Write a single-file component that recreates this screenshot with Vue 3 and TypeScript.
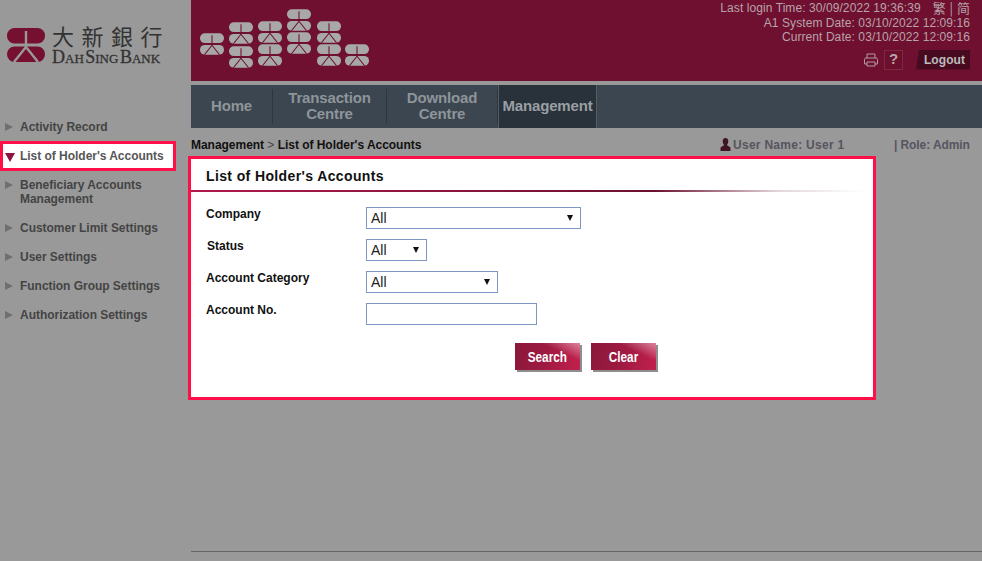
<script setup lang="ts">
import { ref } from 'vue'

const menu = [
  { label: 'Activity Record' },
  { label: "List of Holder's Accounts", active: true },
  { label: 'Beneficiary Accounts Management' },
  { label: 'Customer Limit Settings' },
  { label: 'User Settings' },
  { label: 'Function Group Settings' },
  { label: 'Authorization Settings' },
]

const tabs = [
  { label: 'Home', width: 82 },
  { label: 'Transaction Centre', width: 114 },
  { label: 'Download Centre', width: 111 },
  { label: 'Management', width: 99, active: true },
]

// positions of the little marks in the header banner
const marks = [
  [9, 33], [38, 22], [38, 46], [67, 21], [67, 44],
  [96, 9], [96, 32], [126, 21], [126, 44], [154, 44],
]

const company = ref('All')
const status = ref('All')
const category = ref('All')
const accountNo = ref('')

const clear = () => {
  company.value = 'All'
  status.value = 'All'
  category.value = 'All'
  accountNo.value = ''
}
</script>

<template>
  <div class="page">
    <svg class="defs" width="0" height="0">
      <symbol id="mark" viewBox="0 0 38 34">
        <rect class="pill" x="0" y="0" width="38" height="15.500" rx="7.500" />
        <rect class="pill" x="0" y="18.500" width="38" height="15.500" rx="7.500" />
        <path class="cut" d="M19 3V19M19 19L7 34M19 19L31 34" />
      </symbol>
    </svg>

    <aside class="side">
      <div class="brand">
        <svg class="brand-mark" width="38" height="34"><use href="#mark" /></svg>
        <div class="brand-text">
          <div class="brand-cn">大新銀行</div>
          <div class="brand-en">Dah Sing Bank</div>
        </div>
      </div>
      <ul class="menu">
        <li v-for="item in menu" :key="item.label" :class="{ active: item.active }">
          <span class="arrow"></span>
          <span>{{ item.label }}</span>
        </li>
      </ul>
    </aside>

    <main class="main">
      <header class="banner">
        <svg class="marks" width="191" height="81">
          <use v-for="m in marks" :key="m.join()" href="#mark" :x="m[0]" :y="m[1]" width="24" height="22" />
        </svg>
        <div class="info">
          <div class="line">
            <span>Last login Time: 30/09/2022 19:36:39</span>
            <span class="lang">繁 | 简</span>
          </div>
          <div class="line">A1 System Date: 03/10/2022 12:09:16</div>
          <div class="line">Current Date: 03/10/2022 12:09:16</div>
          <div class="tools">
            <svg class="printer" width="16" height="14" viewBox="0 0 16 14">
              <path d="M4 5V1H12V5M4 11H1.5V6.5Q1.5 5 3 5H13Q14.500 5 14.500 6.500V11H12M4 9H12V13H4Z" />
            </svg>
            <span class="help">?</span>
            <span class="logout">Logout</span>
          </div>
        </div>
      </header>

      <nav class="tabs">
        <a
          v-for="tab in tabs"
          :key="tab.label"
          :class="{ active: tab.active }"
          :style="{ width: tab.width + 'px' }"
        >{{ tab.label }}</a>
      </nav>

      <div class="crumbs">
        <div class="path">Management <span class="gt">&gt;</span> List of Holder's Accounts</div>
        <div class="user">
          <svg width="11" height="13" viewBox="0 0 11 13">
            <path d="M5.500 0C7.500 0 8.300 1.500 8.300 3.300C8.300 5 7.500 6.500 6.800 7L10.500 9.500V13H.5V9.500L4.200 7C3.500 6.500 2.700 5 2.700 3.300C2.700 1.500 3.500 0 5.500 0Z" />
          </svg>
          <span>User Name: User 1</span>
        </div>
        <div class="role">| Role: Admin</div>
      </div>

      <section class="panel">
        <h2>List of Holder's Accounts</h2>
        <div class="rule"></div>
        <form class="form" @submit.prevent>
          <label for="company">Company</label>
          <div class="pick w-lg">
            <select id="company" v-model="company"><option>All</option></select>
          </div>
          <label for="status" class="nudge">Status</label>
          <div class="pick w-sm">
            <select id="status" v-model="status"><option>All</option></select>
          </div>
          <label for="category">Account Category</label>
          <div class="pick w-md">
            <select id="category" v-model="category"><option>All</option></select>
          </div>
          <label for="account">Account No.</label>
          <input id="account" v-model="accountNo" type="text" />
          <div class="actions">
            <button type="submit"><span>Search</span></button>
            <button type="button" @click="clear"><span>Clear</span></button>
          </div>
        </form>
      </section>

      <div class="foot"></div>
    </main>
  </div>
</template>

<style>
html,
body {
  margin: 0;
  background: #999999;
}
</style>

<style scoped>
.page {
  display: flex;
  width: 982px;
  height: 561px;
  overflow: hidden;
  background: #999999;
  font-family: "Liberation Sans", Arial, sans-serif;
  font-size: 12px;
}

.defs {
  position: absolute;
}

.pill {
  fill: currentColor;
}

.cut {
  fill: none;
  stroke: var(--cut, #999999);
  stroke-width: var(--cut-width, 2.4);
}

.side {
  width: 191px;
  flex: none;
}

.brand {
  display: flex;
  gap: 7px;
  height: 112px;
  padding: 24px 0 0 7px;
  box-sizing: border-box;
  color: #761030;
}

.brand-mark {
  margin-top: 4px;
}

.brand-cn {
  font-family: "Noto Sans CJK TC", sans-serif;
  font-weight: 400;
  font-size: 22px;
  line-height: 22px;
  letter-spacing: 7.500px;
  white-space: nowrap;
  color: #333333;
}

.brand-en {
  margin-top: 5px;
  font-family: "Liberation Serif", serif;
  font-variant: small-caps;
  font-size: 18px;
  line-height: 13px;
  word-spacing: -3px;
  white-space: nowrap;
  -webkit-text-stroke: 0.3px #333333;
  color: #333333;
}

.menu {
  list-style: none;
  margin: 0;
  padding: 0;
  width: 176px;
}

.menu li {
  display: flex;
  gap: 7px;
  padding: 8px 8px 7px 5px;
  font-weight: bold;
  line-height: 14px;
  letter-spacing: -0.03px;
  color: #444444;
}

.menu .active {
  height: 14px;
  margin-bottom: -1px;
  padding-bottom: 8px;
  background: #ffffff;
  box-shadow: inset 0 0 0 3px #ff0f47;
  color: #565656;
}

.arrow {
  flex: none;
  width: 0;
  height: 0;
  margin-top: 3px;
  border-left: 8px solid #6f6f6f;
  border-top: 4.5px solid transparent;
  border-bottom: 4.5px solid transparent;
}

.active .arrow {
  margin-top: 4px;
  margin-right: -2px;
  border-left: 5px solid transparent;
  border-right: 5px solid transparent;
  border-top: 9px solid #8e1440;
  border-bottom: 0;
}

.main {
  flex: 1;
  display: flex;
  flex-direction: column;
  min-width: 0;
}

.banner {
  display: flex;
  justify-content: space-between;
  height: 81px;
  background: #701030;
}

.marks {
  --cut: #701030;
  --cut-width: 1.7;
  color: #a8a8a8;
}

.info {
  padding: 1px 12px 0 0;
  text-align: right;
  line-height: 14.5px;
  letter-spacing: 0.08px;
  color: #b7a3aa;
}

.line {
  display: flex;
  justify-content: flex-end;
}

.lang {
  height: 14.5px;
  margin-left: 12px;
  font-family: "Noto Sans CJK TC", sans-serif;
  font-size: 13px;
  line-height: 13px;
  letter-spacing: 0;
  word-spacing: 1px;
}

.tools {
  display: flex;
  align-items: center;
  justify-content: flex-end;
  margin-top: 5px;
}

.printer {
  fill: none;
  stroke: #b09aa3;
  stroke-width: 1;
}

.help {
  display: flex;
  align-items: center;
  justify-content: center;
  width: 17px;
  height: 18px;
  margin-left: 5px;
  border: 1px solid #802842;
  background: #6a0f2c;
  font-size: 15px;
  font-weight: bold;
  color: #b7a3aa;
}

.logout {
  width: 54px;
  height: 20px;
  margin-left: 13px;
  padding-left: 3px;
  box-sizing: border-box;
  line-height: 20px;
  text-align: center;
  background: #480a20;
  clip-path: polygon(3px 0, 100% 0, 100% 100%, 0 100%);
  font-weight: bold;
  color: #bcbcbc;
}

.tabs {
  display: flex;
  height: 43px;
  margin-top: 4px;
  background: #3b4650;
}

.tabs a {
  display: flex;
  align-items: center;
  justify-content: center;
  box-sizing: border-box;
  margin: 4px 0;
  padding: 0 10px 1px;
  border-right: 1px solid #2d363e;
  text-align: center;
  font-size: 15px;
  line-height: 16px;
  letter-spacing: -0.15px;
  font-weight: bold;
  color: #8f9499;
}

.tabs .active {
  margin: 0;
  padding: 0 0 1px;
  background: #29323b;
  border-left: 1px solid #525c65;
  border-right: 1px solid #525c65;
  color: #9a9fa3;
}

.crumbs {
  display: flex;
  align-items: center;
  box-sizing: border-box;
  height: 28px;
  padding-top: 5px;
  font-weight: bold;
  letter-spacing: -0.03px;
  color: #111111;
}

.gt {
  font-weight: normal;
  color: #444444;
}

.path {
  width: 529px;
}

.user {
  display: flex;
  align-items: center;
  gap: 2px;
  width: 174px;
  letter-spacing: 0.28px;
  color: #55555e;
}

.user svg {
  fill: #3f1522;
}

.role {
  letter-spacing: -0.08px;
  color: #55555e;
}

.panel {
  box-sizing: border-box;
  width: 688px;
  height: 244px;
  margin-left: -3px;
  border: 3px solid #ff0f47;
  background: #ffffff;
  color: #111111;
}

h2 {
  margin: 0;
  padding: 9px 0 0 15px;
  height: 22px;
  font-size: 14px;
  line-height: 16px;
  letter-spacing: 0.38px;
}

.rule {
  height: 2px;
  background: linear-gradient(90deg, #b01a4c 0%, #6c1030 68%, #e2d6da 86%, #ffffff 99%);
}

.form {
  display: grid;
  grid-template-columns: 160px auto;
  justify-content: start;
  justify-items: start;
  row-gap: 10px;
  padding: 15px 0 0 15px;
}

label {
  font-weight: bold;
  line-height: 14px;
}

.nudge {
  padding-left: 1px;
}

.pick {
  position: relative;
}

.pick::after {
  content: '';
  position: absolute;
  right: 8px;
  top: 8px;
  border-left: 3px solid transparent;
  border-right: 3px solid transparent;
  border-top: 6px solid #111111;
  pointer-events: none;
}

.w-lg {
  width: 215px;
}

.w-sm {
  width: 61px;
}

.w-md {
  width: 132px;
}

select,
input {
  display: block;
  box-sizing: border-box;
  height: 22px;
  border: 1px solid #7d97c0;
  border-radius: 0;
  outline: none;
  background: #ffffff;
  font-family: "Liberation Sans", Arial, sans-serif;
  font-size: 14px;
  color: #222222;
}

select {
  width: 100%;
  padding: 0 0 1px 4px;
  appearance: none;
}

input {
  width: 171px;
  padding: 0 4px;
}

.actions {
  grid-column: 1 / -1;
  display: flex;
  gap: 11px;
  margin: 8px 0 0 309px;
}

button {
  width: 65px;
  height: 27px;
  padding: 0;
  border: none;
  background:
    linear-gradient(205deg, rgba(255, 255, 255, 0.45) 0%, rgba(255, 255, 255, 0) 32%),
    linear-gradient(100deg, #8a183a 0%, #a01a42 50%, #c2204e 100%);
  box-shadow: 2px 2px 0 #8e8e8e;
  font-family: "Liberation Sans", Arial, sans-serif;
  font-size: 14px;
  font-weight: bold;
  color: #ffffff;
}

button span {
  display: inline-block;
  transform: scaleX(0.84);
}

.foot {
  margin-top: auto;
  margin-bottom: 9px;
  height: 1px;
  background: #666666;
}
</style>
